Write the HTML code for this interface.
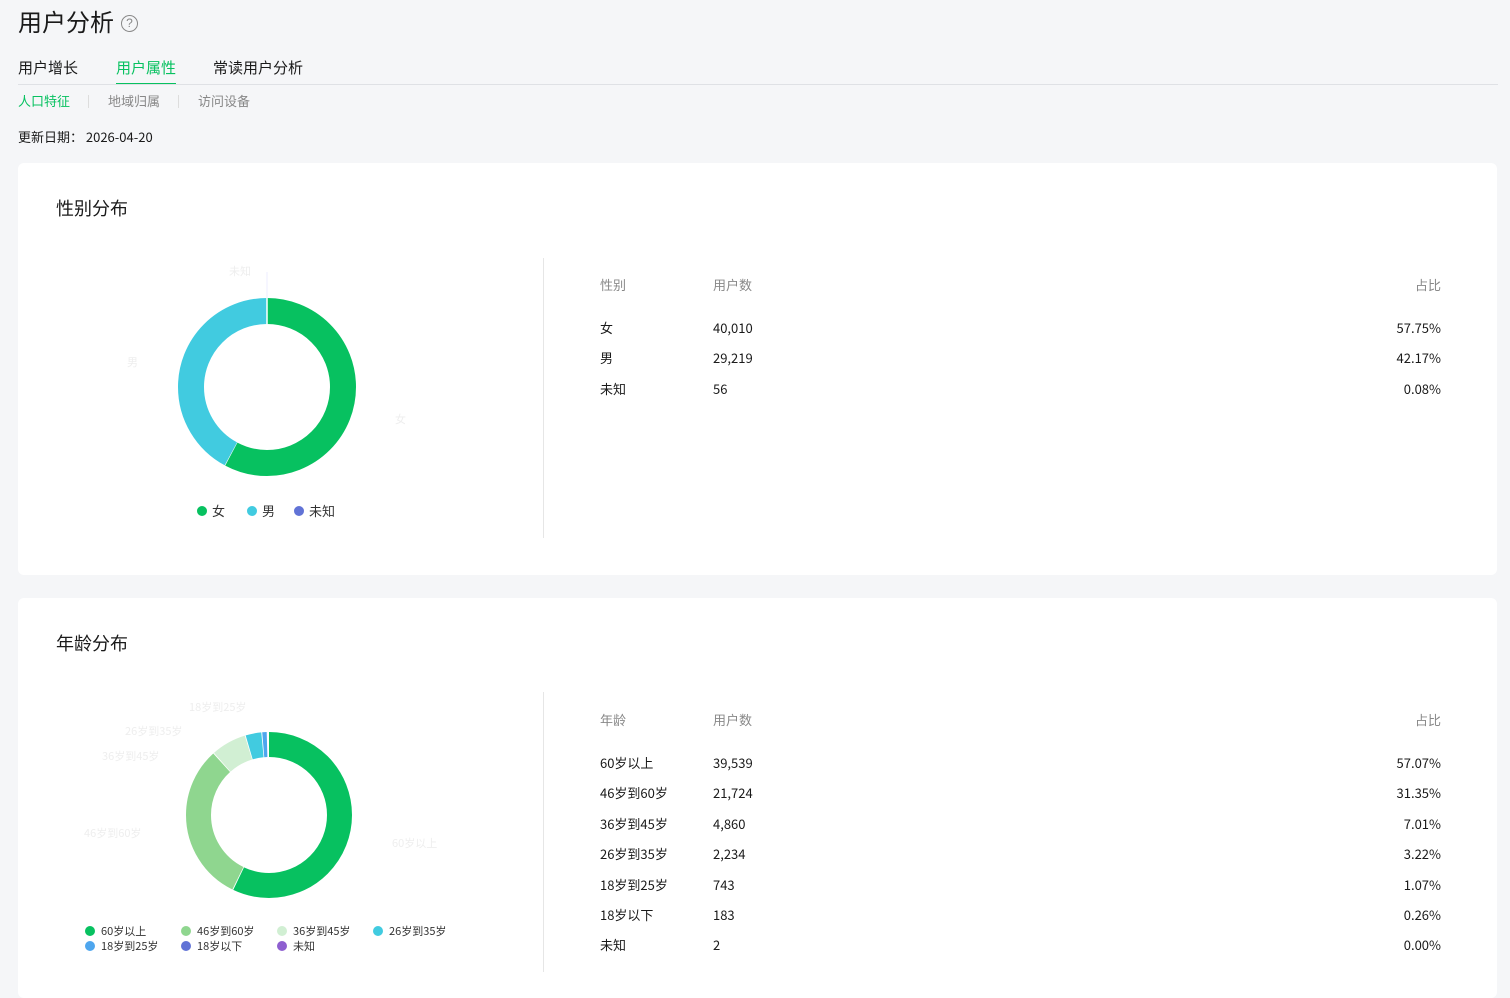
<!DOCTYPE html>
<html><head><meta charset="utf-8"><style>
*{margin:0;padding:0;box-sizing:border-box}
body{width:1510px;height:980px;background:#f5f6f8;font-family:"Noto Sans CJK SC","Liberation Sans",sans-serif;color:#1a1a1a;position:relative;overflow:hidden}
.abs{position:absolute;white-space:nowrap;line-height:1.2}
.card{position:absolute;left:18px;width:1479px;background:#fff;border-radius:6px}
.t{font-size:13px;line-height:18px}
.g{color:#888}
</style></head><body>
<div class="abs" style="left:18px;top:7px;font-size:24px;">用户分析</div>
<div class="abs" style="left:121px;top:15px;width:17px;height:17px;border:1px solid #888;border-radius:50%;font-size:12px;color:#888;text-align:center;line-height:15px;font-family:'Liberation Sans',sans-serif">?</div>
<div class="abs" style="left:18px;top:59px;font-size:15px">用户增长</div>
<div class="abs" style="left:116px;top:59px;font-size:15px;color:#07c160">用户属性</div>
<div class="abs" style="left:116px;top:83px;width:60px;height:2px;background:#07c160"></div>
<div class="abs" style="left:213px;top:59px;font-size:15px">常读用户分析</div>
<div class="abs" style="left:18px;top:84px;width:1480px;height:1px;background:#dfe1e5"></div>
<div class="abs t" style="left:18px;top:92px;color:#07c160">人口特征</div>
<div class="abs" style="left:88px;top:95px;width:1px;height:13px;background:#ddd"></div>
<div class="abs t g" style="left:108px;top:92px">地域归属</div>
<div class="abs" style="left:178px;top:95px;width:1px;height:13px;background:#ddd"></div>
<div class="abs t g" style="left:198px;top:92px">访问设备</div>
<div class="abs t" style="left:18px;top:128px">更新日期：&nbsp;2026-04-20</div>

<div class="card" style="top:163px;height:412px"></div>
<div class="abs" style="left:56px;top:198px;font-size:18px">性别分布</div>
<div class="abs" style="left:543px;top:258px;width:1px;height:280px;background:#e6e6e6"></div>
<svg class="abs" style="left:0;top:0" width="560" height="980">
<g transform="rotate(-90 267 387)">
<circle cx="267" cy="387" r="76" fill="none" stroke="#07c160" stroke-width="26" stroke-dasharray="275.8 1000"/>
<circle cx="267" cy="387" r="76" fill="none" stroke="#41cbe0" stroke-width="26" stroke-dasharray="0 276.3 201 1000"/>
</g>
<line x1="267" y1="298" x2="267" y2="324" stroke="#fff" stroke-width="1.5"/>
<line x1="267" y1="298" x2="267" y2="272" stroke="#eef" stroke-width="1"/>
<g transform="rotate(-90 269 815)">
<circle cx="269" cy="815" r="70.5" fill="none" stroke="#07c160" stroke-width="25" stroke-dasharray="252.8 1000"/>
<circle cx="269" cy="815" r="70.5" fill="none" stroke="#8fd68f" stroke-width="25" stroke-dasharray="0 253.6 137.3 1000"/>
<circle cx="269" cy="815" r="70.5" fill="none" stroke="#d1efd3" stroke-width="25" stroke-dasharray="0 391.7 30.2 1000"/>
<circle cx="269" cy="815" r="70.5" fill="none" stroke="#41cbe0" stroke-width="25" stroke-dasharray="0 422.7 13.5 1000"/>
<circle cx="269" cy="815" r="70.5" fill="none" stroke="#4ea6ee" stroke-width="25" stroke-dasharray="0 437 3.8 1000"/>
</g>
<g font-size="11" fill="#eee" font-family="Noto Sans CJK SC,Liberation Sans,sans-serif">
<text x="229" y="275">未知</text><text x="127" y="366">男</text><text x="395" y="423">女</text>
<text x="189" y="711">18岁到25岁</text><text x="125" y="735">26岁到35岁</text><text x="102" y="760">36岁到45岁</text><text x="84" y="837">46岁到60岁</text><text x="392" y="847">60岁以上</text>
</g>
<g font-size="13" fill="#333" font-family="Noto Sans CJK SC,Liberation Sans,sans-serif">
<circle cx="202" cy="511" r="5" fill="#07c160"/><text x="212" y="516">女</text>
<circle cx="252" cy="511" r="5" fill="#41cbe0"/><text x="262" y="516">男</text>
<circle cx="299" cy="511" r="5" fill="#6173d6"/><text x="309" y="516">未知</text>
</g>
<g font-size="11" fill="#333" font-family="Noto Sans CJK SC,Liberation Sans,sans-serif">
<circle cx="90" cy="931" r="5" fill="#07c160"/><text x="101" y="935">60岁以上</text>
<circle cx="186" cy="931" r="5" fill="#8fd68f"/><text x="197" y="935">46岁到60岁</text>
<circle cx="282" cy="931" r="5" fill="#d1efd3"/><text x="293" y="935">36岁到45岁</text>
<circle cx="378" cy="931" r="5" fill="#41cbe0"/><text x="389" y="935">26岁到35岁</text>
<circle cx="90" cy="946" r="5" fill="#4ea6ee"/><text x="101" y="950">18岁到25岁</text>
<circle cx="186" cy="946" r="5" fill="#6173d6"/><text x="197" y="950">18岁以下</text>
<circle cx="282" cy="946" r="5" fill="#8e5fd0"/><text x="293" y="950">未知</text>
</g>
</svg>
<div class="abs t g" style="left:600px;top:276px">性别</div><div class="abs t g" style="left:713px;top:276px">用户数</div><div class="abs t g" style="right:69px;top:276px">占比</div>
<div class="abs t" style="left:600px;top:319px">女</div><div class="abs t" style="left:713px;top:319px">40,010</div><div class="abs t" style="right:69px;top:319px">57.75%</div>
<div class="abs t" style="left:600px;top:349px">男</div><div class="abs t" style="left:713px;top:349px">29,219</div><div class="abs t" style="right:69px;top:349px">42.17%</div>
<div class="abs t" style="left:600px;top:380px">未知</div><div class="abs t" style="left:713px;top:380px">56</div><div class="abs t" style="right:69px;top:380px">0.08%</div>

<div class="card" style="top:598px;height:400px;z-index:-1"></div>
<div class="abs" style="left:56px;top:633px;font-size:18px">年龄分布</div>
<div class="abs" style="left:543px;top:692px;width:1px;height:280px;background:#e6e6e6"></div>
<div class="abs t g" style="left:600px;top:711px">年龄</div><div class="abs t g" style="left:713px;top:711px">用户数</div><div class="abs t g" style="right:69px;top:711px">占比</div>
<div class="abs t" style="left:600px;top:754px">60岁以上</div><div class="abs t" style="left:713px;top:754px">39,539</div><div class="abs t" style="right:69px;top:754px">57.07%</div>
<div class="abs t" style="left:600px;top:784px">46岁到60岁</div><div class="abs t" style="left:713px;top:784px">21,724</div><div class="abs t" style="right:69px;top:784px">31.35%</div>
<div class="abs t" style="left:600px;top:815px">36岁到45岁</div><div class="abs t" style="left:713px;top:815px">4,860</div><div class="abs t" style="right:69px;top:815px">7.01%</div>
<div class="abs t" style="left:600px;top:845px">26岁到35岁</div><div class="abs t" style="left:713px;top:845px">2,234</div><div class="abs t" style="right:69px;top:845px">3.22%</div>
<div class="abs t" style="left:600px;top:876px">18岁到25岁</div><div class="abs t" style="left:713px;top:876px">743</div><div class="abs t" style="right:69px;top:876px">1.07%</div>
<div class="abs t" style="left:600px;top:906px">18岁以下</div><div class="abs t" style="left:713px;top:906px">183</div><div class="abs t" style="right:69px;top:906px">0.26%</div>
<div class="abs t" style="left:600px;top:936px">未知</div><div class="abs t" style="left:713px;top:936px">2</div><div class="abs t" style="right:69px;top:936px">0.00%</div>
</body></html>
